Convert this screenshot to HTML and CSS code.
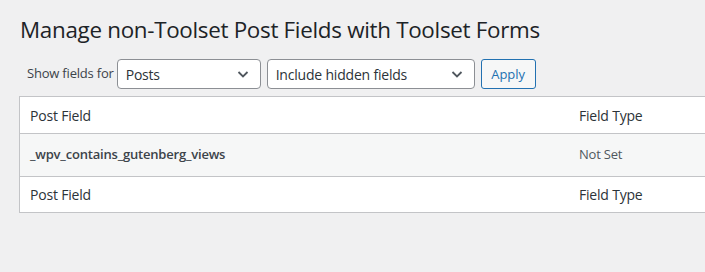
FILE: index.html
```html
<!DOCTYPE html>
<html lang="en">
<head>
  <meta charset="UTF-8" />
  <title>Manage non-Toolset Post Fields with Toolset Forms</title>
  <link rel="stylesheet" href="styles.css">
</head>
<body>

<div class="wrap">
  <h1>Manage non-Toolset Post Fields with Toolset Forms</h1>

  <div class="filters">
    <label class="filter-label">Show fields for</label>
    <div class="select select-type">
      <span>Posts</span>
      <svg class="chevron" width="14" height="14" viewBox="0 0 14 14"><path d="M2.5 5l4.5 4.5L11.5 5" fill="none" stroke="#50575e" stroke-width="1.8"/></svg>
    </div>
    <div class="select select-hidden">
      <span>Include hidden fields</span>
      <svg class="chevron" width="14" height="14" viewBox="0 0 14 14"><path d="M2.5 5l4.5 4.5L11.5 5" fill="none" stroke="#50575e" stroke-width="1.8"/></svg>
    </div>
    <button class="button">Apply</button>
  </div>

  <table class="fields">
    <thead>
      <tr>
        <th class="col-name">Post Field</th>
        <th class="col-type">Field Type</th>
      </tr>
    </thead>
    <tbody>
      <tr>
        <td class="field-name">_wpv_contains_gutenberg_views</td>
        <td class="field-type">Not Set</td>
      </tr>
    </tbody>
    <tfoot>
      <tr>
        <th class="col-name">Post Field</th>
        <th class="col-type">Field Type</th>
      </tr>
    </tfoot>
  </table>
</div>

</body>
</html>
```

FILE: styles.css
```css
body {
  margin: 0;
  background-color: #f0f0f1;
  font-family: "Open Sans", "Noto Sans", sans-serif;
  color: #3c434a;
  overflow: hidden;
}

.wrap {
  padding: 0 0 0 19px;
}

h1 {
  font-size: 22.4px;
  font-weight: 400;
  color: #1d2327;
  margin: 0;
  padding: 15px 0 0 1px;
  height: 39px;
  line-height: 30px;
  letter-spacing: -0.3px;
}

.filters {
  display: flex;
  align-items: center;
  height: 30px;
  margin-top: 5px;
}

.filter-label {
  font-size: 13px;
  color: #3c434a;
  margin: 0 3px 0 8px;
  letter-spacing: -0.2px;
  padding-bottom: 3px;
}

.select {
  box-sizing: border-box;
  height: 30px;
  border: 1px solid #8c8f94;
  border-radius: 4px;
  background-color: #fff;
  display: flex;
  align-items: center;
  justify-content: space-between;
  padding: 0 10px 0 8px;
  font-size: 14px;
  color: #2c3338;
  margin-right: 6px;
  letter-spacing: -0.2px;
}

.select-type {
  width: 144px;
}

.select-hidden {
  width: 208px;
}

.button {
  box-sizing: border-box;
  height: 30px;
  width: 55px;
  border: 1px solid #2271b1;
  border-radius: 3px;
  background-color: #f6f7f7;
  color: #2271b1;
  font-family: inherit;
  font-size: 13px;
  padding: 0;
}

.fields {
  margin-top: 7px;
  width: 800px;
  border: 1px solid #c3c4c7;
  border-collapse: collapse;
  background-color: #fff;
}

.fields th {
  font-weight: 400;
  font-size: 14px;
  color: #2c3338;
  text-align: left;
  padding: 0 10px;
  letter-spacing: -0.2px;
}

.fields thead th {
  height: 36px;
  border-bottom: 1px solid #c3c4c7;
}

.fields tfoot th {
  height: 35px;
  border-top: 1px solid #c3c4c7;
}

.col-name {
  width: 529px;
}

.fields tbody tr {
  background-color: #f6f7f7;
}

.fields td {
  height: 39px;
  padding: 0 10px 3px;
  font-size: 13px;
  letter-spacing: -0.2px;
}

.field-name {
  font-weight: 600;
  color: #3c434a;
  letter-spacing: -0.4px;
}

.field-type {
  color: #50575e;
}
```
